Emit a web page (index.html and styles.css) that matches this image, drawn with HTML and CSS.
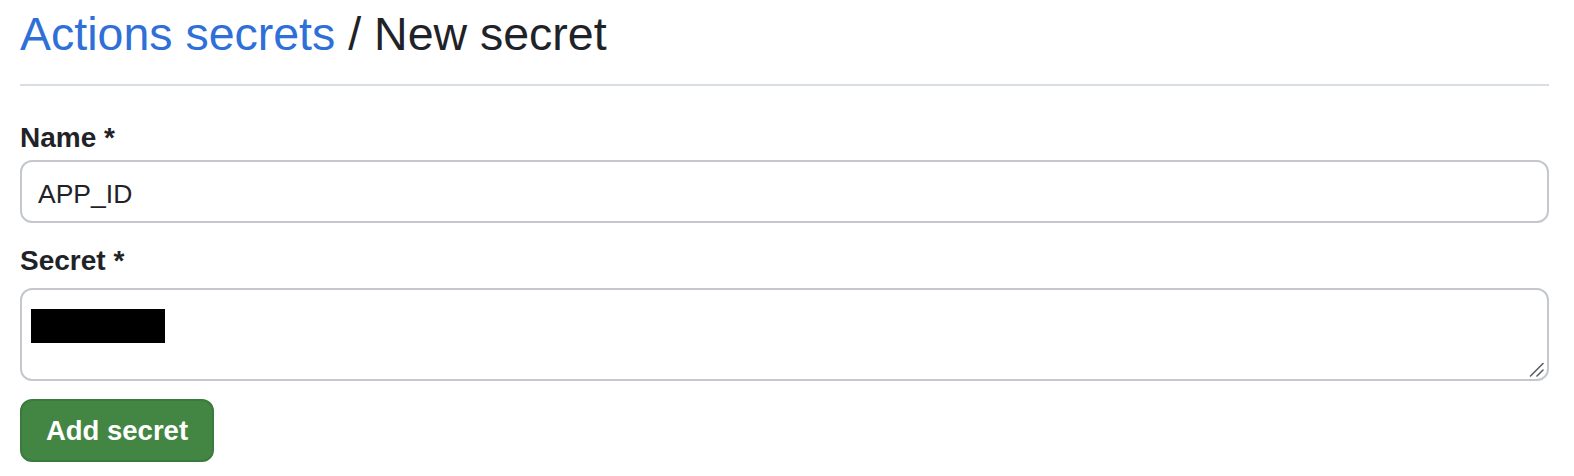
FILE: index.html
```html
<!DOCTYPE html>
<html lang="en">
<head>
<meta charset="utf-8">
<title>New secret</title>
<link rel="stylesheet" href="styles.css">
</head>
<body>
<main class="page">
  <div class="subhead">
    <h2 class="subhead-title"><a class="crumb" href="#">Actions secrets</a> / New secret</h2>
  </div>
  <form class="secret-form">
    <label class="field-label field-label-name" for="secret-name">Name *</label>
    <input class="text-input" id="secret-name" type="text" value="APP_ID">
    <label class="field-label field-label-secret">Secret *</label>
    <div class="textarea">
      <span class="redacted"></span>
      <svg class="grabber" width="16" height="16" viewBox="0 0 16 16" aria-hidden="true">
        <path d="M2.5 15 L15 2.5" stroke="#5a5e63" stroke-width="1.6" stroke-linecap="round"/>
        <path d="M9 15 L15 9" stroke="#5a5e63" stroke-width="1.6" stroke-linecap="round"/>
      </svg>
    </div>
    <button class="btn-primary" type="button">Add secret</button>
  </form>
</main>
</body>
</html>
```

FILE: styles.css
```css
* {
  box-sizing: border-box;
}

html, body {
  margin: 0;
  background: #ffffff;
}

body {
  font-family: "Liberation Sans", Arial, sans-serif;
  color: #1f2328;
}

.page {
  padding: 0 25px 0 20px;
}

.subhead {
  padding-top: 6px;
  padding-bottom: 22px;
  border-bottom: 2px solid #d8dee4;
}

.subhead-title {
  margin: 0;
  font-size: 46.5px;
  font-weight: 400;
  line-height: 56px;
  color: #1f2328;
}

.crumb {
  color: #2f6fd8;
  text-decoration: none;
}

.secret-form {
  display: flex;
  flex-direction: column;
  align-items: stretch;
}

.field-label {
  display: block;
  font-size: 28px;
  font-weight: 700;
  line-height: 34px;
  color: #1f2328;
}

.field-label-name {
  margin: 35px 0 5px;
}

.field-label-secret {
  margin: 21px 0 10px;
}

.text-input {
  display: block;
  width: 100%;
  height: 63px;
  margin: 0;
  padding: 6px 16px 0;
  border: 2px solid #c4c8cc;
  border-radius: 12px;
  background: #ffffff;
  font-family: "Liberation Sans", Arial, sans-serif;
  font-size: 26.5px;
  color: #1f2328;
  outline: none;
}

.textarea {
  position: relative;
  display: flex;
  align-items: flex-start;
  height: 93px;
  padding: 19px 9px;
  border: 2px solid #c4c8cc;
  border-radius: 12px;
  background: #ffffff;
}

.redacted {
  display: block;
  width: 134px;
  height: 34px;
  background: #000000;
}

.grabber {
  position: absolute;
  right: 3px;
  bottom: 2px;
}

.btn-primary {
  align-self: flex-start;
  width: 194px;
  height: 63px;
  margin-top: 18px;
  padding: 0;
  border: 2px solid #3b7a3d;
  border-radius: 12px;
  background: #438644;
  color: #ffffff;
  font-family: "Liberation Sans", Arial, sans-serif;
  font-size: 27.5px;
  font-weight: 700;
  line-height: 1;
  cursor: pointer;
}
```
